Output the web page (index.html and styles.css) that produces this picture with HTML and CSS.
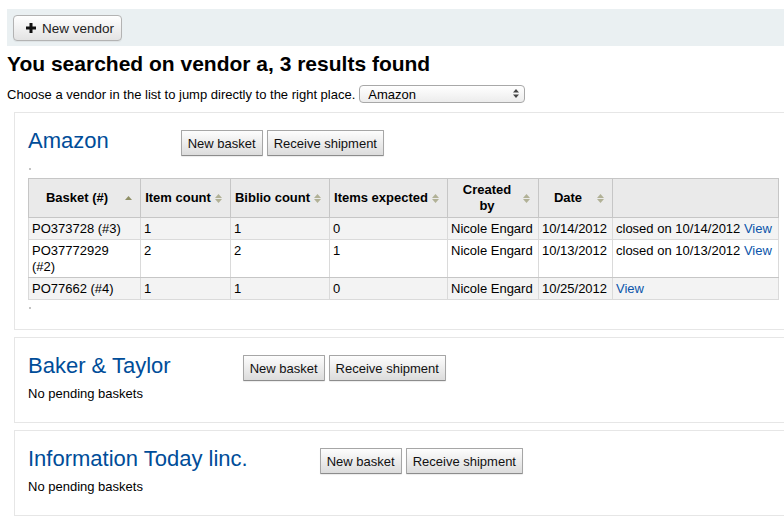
FILE: index.html
```html
<!DOCTYPE html>
<html lang="en">
<head>
<meta charset="utf-8">
<title>Vendor search</title>
<link rel="stylesheet" href="styles.css">
</head>
<body>
<div class="page">
  <div class="toolbar">
    <button class="btn-vendor" type="button">
      <svg class="plus" width="12" height="12" viewBox="0 0 12 12"><path d="M6 1v10M1 6h10" stroke="#111" stroke-width="3" fill="none"/></svg>
      <span>New vendor</span>
    </button>
  </div>

  <h1 class="title">You searched on vendor a, 3 results found</h1>

  <div class="choose">
    <span>Choose a vendor in the list to jump directly to the right place.</span>
    <span class="select-wrap">
      <select class="vendor-select">
        <option>Amazon</option>
        <option>Baker &amp; Taylor</option>
        <option>Information Today linc.</option>
      </select>
      <svg class="select-arrows" width="6" height="9" viewBox="0 0 6 9"><path d="M3 0L6 3.5H0z M3 9L6 5.5H0z" fill="#444"/></svg>
    </span>
  </div>

  <div class="vendor">
    <div class="vendor-head">
      <h2 class="vendor-name"><a href="#">Amazon</a></h2>
      <div class="actions">
        <button class="btn" type="button">New basket</button>
        <button class="btn" type="button">Receive shipment</button>
      </div>
    </div>
    <div class="dt-stub"></div>
    <table class="baskets">
      <thead>
        <tr>
          <th>Basket (#)<svg class="sort" width="7" height="4" viewBox="0 0 7 4"><path d="M3.5 0L7 4H0z" fill="#8f8f66"/></svg></th>
          <th>Item count<svg class="sort both" width="7" height="9" viewBox="0 0 7 9"><path d="M3.5 0L7 4H0z M3.5 9L7 5H0z" fill="#b1b196"/></svg></th>
          <th>Biblio count<svg class="sort both" width="7" height="9" viewBox="0 0 7 9"><path d="M3.5 0L7 4H0z M3.5 9L7 5H0z" fill="#b1b196"/></svg></th>
          <th>Items expected<svg class="sort both" width="7" height="9" viewBox="0 0 7 9"><path d="M3.5 0L7 4H0z M3.5 9L7 5H0z" fill="#b1b196"/></svg></th>
          <th class="narrow">Created by<svg class="sort both" width="7" height="9" viewBox="0 0 7 9"><path d="M3.5 0L7 4H0z M3.5 9L7 5H0z" fill="#b1b196"/></svg></th>
          <th>Date<svg class="sort both" width="7" height="9" viewBox="0 0 7 9"><path d="M3.5 0L7 4H0z M3.5 9L7 5H0z" fill="#b1b196"/></svg></th>
          <th class="nosort"></th>
        </tr>
      </thead>
      <tbody>
        <tr class="odd">
          <td>PO373728 (#3)</td><td>1</td><td>1</td><td>0</td><td>Nicole Engard</td><td>10/14/2012</td>
          <td>closed on 10/14/2012 <a href="#">View</a></td>
        </tr>
        <tr>
          <td><span class="basket-no">PO37772929</span> (#2)</td><td>2</td><td>2</td><td>1</td><td>Nicole Engard</td><td>10/13/2012</td>
          <td>closed on 10/13/2012 <a href="#">View</a></td>
        </tr>
        <tr class="odd">
          <td>PO77662 (#4)</td><td>1</td><td>1</td><td>0</td><td>Nicole Engard</td><td>10/25/2012</td>
          <td><a href="#">View</a></td>
        </tr>
      </tbody>
    </table>
    <div class="dt-stub after"></div>
  </div>

  <div class="vendor">
    <div class="vendor-head">
      <h2 class="vendor-name"><a href="#">Baker &amp; Taylor</a></h2>
      <div class="actions">
        <button class="btn" type="button">New basket</button>
        <button class="btn" type="button">Receive shipment</button>
      </div>
    </div>
    <p class="none">No pending baskets</p>
  </div>

  <div class="vendor">
    <div class="vendor-head">
      <h2 class="vendor-name"><a href="#">Information Today linc.</a></h2>
      <div class="actions">
        <button class="btn" type="button">New basket</button>
        <button class="btn" type="button">Receive shipment</button>
      </div>
    </div>
    <p class="none">No pending baskets</p>
  </div>
</div>
</body>
</html>
```

FILE: styles.css
```css
html, body {
  margin: 0;
  padding: 0;
  background: #fff;
  overflow: hidden;
}
body {
  font-family: "Liberation Sans", Arial, sans-serif;
  font-size: 13px;
  color: #000;
}
.page {
  padding: 9px 0 0 7px;
}
.toolbar {
  background: #eaf0f2;
  height: 37px;
  margin-right: -20px;
  padding: 6px 0 0 6px;
  box-sizing: border-box;
}
.btn-vendor {
  display: flex;
  align-items: center;
  gap: 5px;
  height: 26px;
  width: 109px;
  padding: 0 0 0 11px;
  border: 1px solid #b3b3b3;
  border-radius: 4px;
  background: linear-gradient(#ffffff, #e3e3e3);
  box-shadow: 0 1px 1px rgba(0,0,0,0.06);
  font-family: "Liberation Sans", Arial, sans-serif;
  font-size: 13.5px;
  color: #222;
  box-sizing: border-box;
}
.plus { display: block; }
.title {
  font-size: 21px;
  font-weight: bold;
  line-height: 24px;
  margin: 6px 0 0 0;
}
.choose {
  display: flex;
  align-items: center;
  gap: 4px;
  margin-top: 9px;
  height: 18px;
}
.select-wrap {
  position: relative;
  display: inline-block;
}
.vendor-select {
  appearance: none;
  -webkit-appearance: none;
  width: 166px;
  height: 18px;
  border: 1px solid #a8a8a8;
  border-radius: 4px;
  background: linear-gradient(#ffffff, #ececec);
  font-family: "Liberation Sans", Arial, sans-serif;
  font-size: 13px;
  padding: 0 0 0 8px;
  color: #000;
  display: block;
}
.select-arrows {
  position: absolute;
  right: 6px;
  top: 4px;
}
.vendor {
  border: 1px solid #e6e6e6;
  margin: 9px -30px 0 7px;
  padding: 17px 14px 20px 13px;
}
.vendor + .vendor { margin-top: 7px; }
.vendor-head {
  display: flex;
  align-items: center;
  gap: 72px;
  height: 26px;
}
.vendor-name {
  margin: 0 0 4px 0;
  font-size: 22px;
  font-weight: normal;
  line-height: 24px;
}
.vendor-name a {
  color: #004d99;
  text-decoration: none;
}
.actions {
  display: flex;
  gap: 4px;
}
.btn {
  height: 26px;
  padding: 0 6px;
  border: 1px solid #a6a6a6;
  border-bottom-color: #8c8c8c;
  border-radius: 1px;
  background: linear-gradient(#fdfdfd, #dcdcdc);
  box-shadow: 0 1px 1px rgba(0,0,0,0.08);
  font-family: "Liberation Sans", Arial, sans-serif;
  font-size: 13px;
  color: #111;
}
.dt-stub {
  width: 2px;
  height: 2px;
  background: #c4c4c4;
  margin: 12px 0 0 1px;
}
.dt-stub.after { margin-top: 7px; }
.baskets {
  border-collapse: collapse;
  table-layout: fixed;
  width: 750px;
  margin-top: 8px;
  border: 1px solid #c6c6c6;
  line-height: 16px;
}
.baskets th, .baskets td {
  box-sizing: border-box;
}
.baskets th {
  position: relative;
  background: #eaeaea;
  border: 1px solid #c6c6c6;
  font-weight: bold;
  text-align: center;
  padding: 3px 18px 3px 3px;
  font-size: 13px;
}
.baskets th.narrow { padding-left: 8px; padding-right: 20px; }
.baskets th.nosort { padding: 0; }
.baskets th:nth-child(1) { width: 112px; }
.baskets th:nth-child(2) { width: 90px; }
.baskets th:nth-child(3) { width: 99px; }
.baskets th:nth-child(4) { width: 118px; }
.baskets th:nth-child(5) { width: 91px; }
.baskets th:nth-child(6) { width: 74px; }
.baskets th:nth-child(7) { width: 166px; }
.sort {
  position: absolute;
  right: 8px;
  top: 50%;
  margin-top: -2px;
}
.sort.both { margin-top: -4px; }
.baskets td {
  border: 1px solid #dadada;
  padding: 3px 4px 2px 3px;
  vertical-align: top;
  text-align: left;
}
.basket-no { display: block; }
.baskets tr.odd td { background: #f3f3f3; }
.baskets tbody tr:nth-child(2) td { border-bottom-color: #c6c6c6; }
.baskets a {
  color: #0b55aa;
  text-decoration: none;
}
.none {
  margin: 5px 0 0 0;
  line-height: 16px;
}
.vendor:has(.none) { padding-bottom: 20px; }
```
